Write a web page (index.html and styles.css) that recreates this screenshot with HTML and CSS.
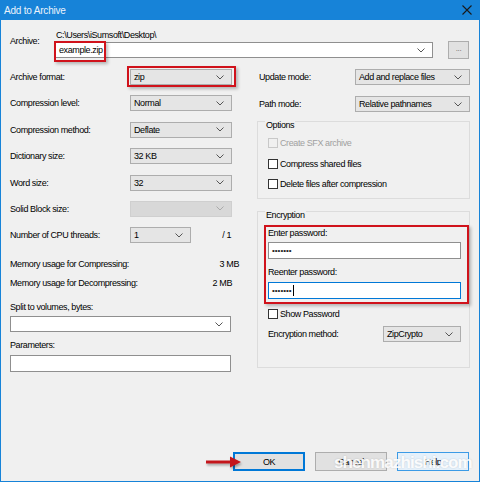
FILE: index.html
```html
<!DOCTYPE html>
<html>
<head>
<title>Add to Archive</title>
<link rel="stylesheet" href="styles.css">
</head>
<body>

<div class="window">
  <div class="titlebar">
    <span class="title">Add to Archive</span>
    <svg class="close" width="10" height="10" viewBox="0 0 10 10"><path d="M0.5 0.5 L9.5 9.5 M9.5 0.5 L0.5 9.5" stroke="#1a1a1a" stroke-width="1.1" fill="none"/></svg>
  </div>

  <div class="content">
    <div class="archive">
      <div class="archive-label">Archive:</div>
      <div class="archive-main">
        <div class="path">C:\Users\iSumsoft\Desktop\</div>
        <div class="archive-row">
          <div class="combo edit archive-combo"><span>example.zip</span><svg class="chev" width="8" height="5" viewBox="0 0 8 5"><path d="M0.5 0.5 L4 4 L7.5 0.5" stroke="#555" fill="none"/></svg></div>
          <div class="btn browse">...</div>
        </div>
      </div>
    </div>

    <div class="columns">
      <div class="col left">
        <div class="row"><span class="lbl">Archive format:</span><div class="combo"><span>zip</span><svg class="chev" width="8" height="5" viewBox="0 0 8 5"><path d="M0.5 0.5 L4 4 L7.5 0.5" stroke="#555" fill="none"/></svg></div></div>
        <div class="row"><span class="lbl">Compression level:</span><div class="combo"><span>Normal</span><svg class="chev" width="8" height="5" viewBox="0 0 8 5"><path d="M0.5 0.5 L4 4 L7.5 0.5" stroke="#555" fill="none"/></svg></div></div>
        <div class="row"><span class="lbl">Compression method:</span><div class="combo"><span>Deflate</span><svg class="chev" width="8" height="5" viewBox="0 0 8 5"><path d="M0.5 0.5 L4 4 L7.5 0.5" stroke="#555" fill="none"/></svg></div></div>
        <div class="row"><span class="lbl">Dictionary size:</span><div class="combo"><span>32 KB</span><svg class="chev" width="8" height="5" viewBox="0 0 8 5"><path d="M0.5 0.5 L4 4 L7.5 0.5" stroke="#555" fill="none"/></svg></div></div>
        <div class="row"><span class="lbl">Word size:</span><div class="combo"><span>32</span><svg class="chev" width="8" height="5" viewBox="0 0 8 5"><path d="M0.5 0.5 L4 4 L7.5 0.5" stroke="#555" fill="none"/></svg></div></div>
        <div class="row"><span class="lbl">Solid Block size:</span><div class="combo disabled"><span></span><svg class="chev" width="8" height="5" viewBox="0 0 8 5"><path d="M0.5 0.5 L4 4 L7.5 0.5" stroke="#aaa" fill="none"/></svg></div></div>
        <div class="row"><span class="lbl">Number of CPU threads:</span><div class="combo cpu"><span>1</span><svg class="chev" width="8" height="5" viewBox="0 0 8 5"><path d="M0.5 0.5 L4 4 L7.5 0.5" stroke="#555" fill="none"/></svg></div><span class="of">/ 1</span></div>

        <div class="mem first"><span>Memory usage for Compressing:</span><span class="mb wide">3 MB</span></div>
        <div class="mem"><span>Memory usage for Decompressing:</span><span class="mb">2 MB</span></div>

        <div class="caption split">Split to volumes, bytes:</div>
        <div class="combo edit full"><span></span><svg class="chev" width="8" height="5" viewBox="0 0 8 5"><path d="M0.5 0.5 L4 4 L7.5 0.5" stroke="#555" fill="none"/></svg></div>
        <div class="caption params">Parameters:</div>
        <div class="field full"></div>
      </div>

      <div class="col right">
        <div class="row"><span class="lbl">Update mode:</span><div class="combo"><span>Add and replace files</span><svg class="chev" width="8" height="5" viewBox="0 0 8 5"><path d="M0.5 0.5 L4 4 L7.5 0.5" stroke="#555" fill="none"/></svg></div></div>
        <div class="row"><span class="lbl">Path mode:</span><div class="combo"><span>Relative pathnames</span><svg class="chev" width="8" height="5" viewBox="0 0 8 5"><path d="M0.5 0.5 L4 4 L7.5 0.5" stroke="#555" fill="none"/></svg></div></div>

        <div class="group options">
          <div class="legend">Options</div>
          <div class="check off first"><span class="box"></span>Create SFX archive</div>
          <div class="check"><span class="box"></span>Compress shared files</div>
          <div class="check"><span class="box"></span>Delete files after compression</div>
        </div>

        <div class="group encryption">
          <div class="legend">Encryption</div>
          <div class="caption enter">Enter password:</div>
          <div class="field pass"><span class="dots">•••••••</span></div>
          <div class="caption reenter">Reenter password:</div>
          <div class="field pass focus"><span class="dots">•••••••</span><span class="caret"></span></div>
          <div class="check show"><span class="box"></span>Show Password</div>
          <div class="row method"><span class="lbl">Encryption method:</span><div class="combo"><span>ZipCrypto</span><svg class="chev" width="8" height="5" viewBox="0 0 8 5"><path d="M0.5 0.5 L4 4 L7.5 0.5" stroke="#555" fill="none"/></svg></div></div>
        </div>
      </div>
    </div>

    <div class="buttons">
      <div class="btn default">OK</div>
      <div class="btn">Cancel</div>
      <div class="btn hover">Help</div>
    </div>
  </div>

  <!-- red highlight marks drawn over the dialog -->
  <div class="mark mark-name"></div>
  <div class="mark mark-format"></div>
  <div class="mark mark-encrypt"></div>
  <svg class="arrow" width="38" height="14" viewBox="0 0 38 14"><path d="M1 7 L27 7" stroke="#c4161c" stroke-width="3"/><path d="M25 1.5 L36 7 L25 12.5 Z" fill="#c4161c"/></svg>

  <div class="watermark">shenmazhishi.com</div>
</div>

</body>
</html>
```

FILE: styles.css
```css
* {
    box-sizing: border-box;
}

body {
    margin: 0;
    background: #f0f0f0;
    color: #000;
    font-family: "Liberation Sans", Arial, sans-serif;
    font-size: 9px;
    letter-spacing: -0.4px;
}

.window {
    position: relative;
    width: 480px;
    height: 482px;
    border: 1px solid #1783d8;
    border-top: none;
    background: #f0f0f0;
    display: flex;
    flex-direction: column;
    overflow: hidden;
}

.titlebar {
    height: 20px;
    margin: 0 -1px;
    padding: 0 8px 0 4px;
    background: #1783d8;
    color: #eaf3fc;
    font-size: 10px;
    letter-spacing: -0.2px;
    display: flex;
    align-items: center;
    justify-content: space-between;
    flex-shrink: 0;
}

.content {
    flex: 1;
    display: flex;
    flex-direction: column;
    padding: 10px 9px 10px 9px;
}

/* archive name */
.archive {
    display: flex;
}

.archive-label {
    width: 45px;
    margin-top: 6px;
    line-height: 11px;
}

.archive-main {
    flex: 1;
}

.path {
    line-height: 11px;
    padding-left: 1px;
}

.archive-row {
    display: flex;
    gap: 15px;
    margin-top: 1px;
}

.archive-combo {
    width: 378px;
    height: 17px;
}

/* combos, fields */
.combo {
    display: flex;
    align-items: center;
    height: 16px;
    padding: 0 7px 0 3px;
    background: #e5e5e5;
    border: 1px solid #adadad;
    white-space: nowrap;
}

.combo .chev {
    margin-left: auto;
    flex-shrink: 0;
}

.combo.edit {
    background: #fff;
    border-color: #8f8f8f;
}

.combo.disabled {
    background: #d8d8d8;
    border-color: #cfcfcf;
}

.field {
    height: 17px;
    background: #fff;
    border: 1px solid #8f8f8f;
    display: flex;
    align-items: center;
    padding-left: 3px;
}

/* two columns */
.columns {
    display: flex;
    gap: 25px;
    margin-top: 10px;
}

.col.left {
    width: 222px;
}

.col.right {
    width: 213px;
}

.row {
    display: flex;
    align-items: center;
    height: 16px;
    margin-bottom: 10.4px;
}

.left .lbl {
    width: 120px;
}

.left .combo {
    width: 102px;
}

.left .combo.cpu {
    width: 61px;
}

.left .combo.full,
.left .field.full {
    width: 221px;
}

.of {
    flex: 1;
    text-align: right;
    padding-right: 1px;
}

.mem {
    display: flex;
    justify-content: space-between;
    line-height: 12px;
    margin-top: 7px;
}

.mem.first {
    margin-top: 15px;
}

.mb.wide {
    margin-right: -7px;
}

.caption {
    line-height: 12px;
}

.caption.split {
    margin-top: 12px;
    margin-bottom: 3px;
}

.caption.params {
    margin-top: 7px;
    margin-bottom: 4px;
}

.right .row {
    padding-left: 2px;
    margin-bottom: 11px;
}

.right .row .lbl {
    width: 96px;
}

.right .row .combo {
    width: 115px;
}

/* group boxes */
.group {
    border: 1px solid #dcdcdc;
    padding: 0 8px 0 10px;
}

.legend {
    width: fit-content;
    height: 11px;
    margin: -2px 0 0 -3px;
    padding: 0 1px;
    line-height: 11px;
    background: #f0f0f0;
}

.options {
    margin-top: -2px;
    padding-bottom: 8px;
}

.check {
    display: flex;
    align-items: center;
    gap: 2px;
    height: 12px;
    margin-top: 8.5px;
}

.check.first {
    margin-top: 6px;
}

.box {
    width: 10px;
    height: 10px;
    border: 1px solid #333;
    background: #fff;
}

.check.off {
    color: #a0a0a0;
}

.check.off .box {
    border-color: #c8c8c8;
    background: #f0f0f0;
}

.encryption {
    margin-top: 12px;
    padding-bottom: 25px;
}

.caption.enter {
    margin-top: 6px;
    margin-bottom: 3px;
}

.caption.reenter {
    margin-top: 7px;
    margin-bottom: 4px;
}

.field.pass {
    width: 193px;
}

.field.focus {
    border-color: #0078d7;
}

.dots {
    font-size: 8px;
    letter-spacing: 0;
    color: #222;
}

.caret {
    width: 1px;
    height: 11px;
    margin-left: 1px;
    background: #000;
}

.check.show {
    margin-top: 9px;
}

.encryption .row.method {
    padding-left: 0;
    margin: 6px 0 0 0;
}

.encryption .row.method .lbl {
    width: 115px;
}

.encryption .row.method .combo {
    width: 78px;
}

/* dialog buttons */
.buttons {
    margin-top: auto;
    display: flex;
    justify-content: flex-end;
    gap: 10px;
    padding-right: 1px;
}

.btn {
    display: flex;
    align-items: center;
    justify-content: center;
    width: 72px;
    height: 19px;
    background: #e1e1e1;
    border: 1px solid #adadad;
}

.btn.default {
    border-color: #0078d7;
    box-shadow: inset 0 0 0 1px #0078d7;
}

.btn.hover {
    background: #e5f1fb;
    border-color: #3c9be6;
}

.btn.browse {
    width: 21px;
    height: 18px;
    margin-top: -1px;
    padding-bottom: 3px;
    font-size: 8px;
    color: #666;
}

/* annotations */
.mark {
    position: absolute;
    border: 2px solid #d0121b;
    box-shadow: 2px 2px 3px rgba(0,0,0,0.25);
}

.mark-name {
    left: 53px;
    top: 41px;
    width: 52px;
    height: 21px;
}

.mark-format {
    left: 126px;
    top: 66px;
    width: 109px;
    height: 21px;
}

.mark-encrypt {
    left: 263px;
    top: 225px;
    width: 205px;
    height: 79px;
}

.arrow {
    position: absolute;
    left: 204px;
    top: 455px;
    filter: drop-shadow(1px 2px 1px rgba(0,0,0,0.3));
}

.watermark {
    position: absolute;
    left: 333px;
    top: 453px;
    font-size: 17px;
    font-weight: bold;
    letter-spacing: -0.9px;
    color: rgba(255,255,255,0.92);
    text-shadow: 0 0 2px rgba(0,0,0,0.15);
    white-space: nowrap;
}
```
